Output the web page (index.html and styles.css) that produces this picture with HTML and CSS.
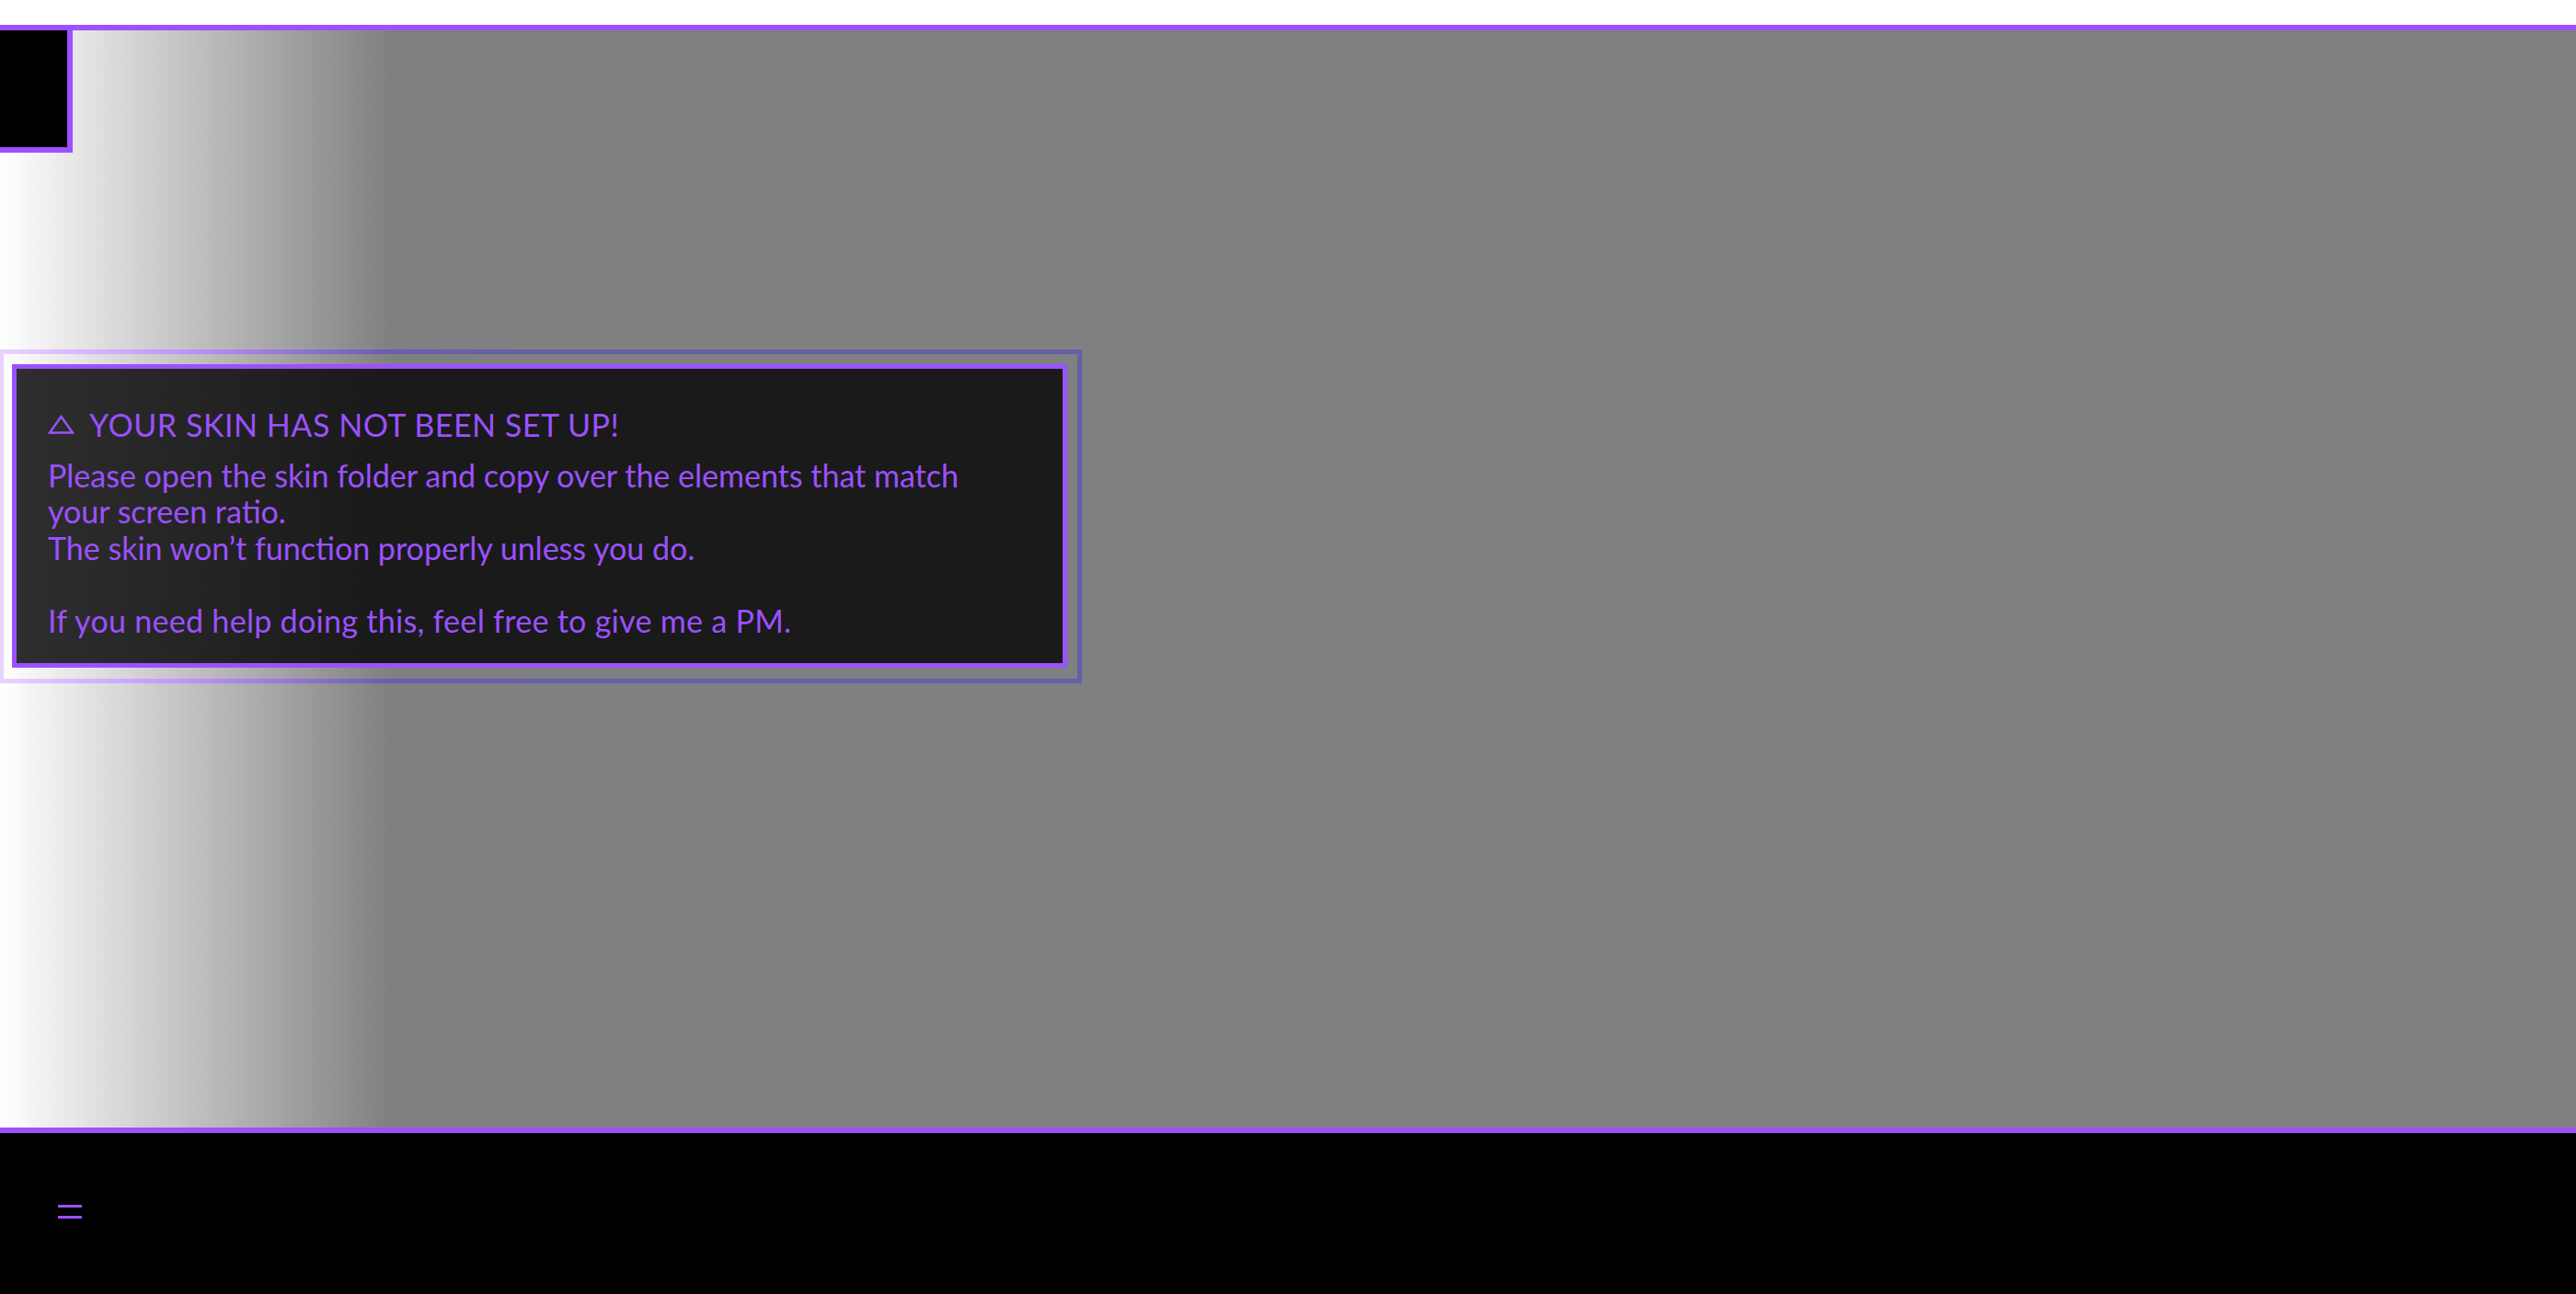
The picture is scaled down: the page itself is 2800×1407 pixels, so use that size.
FILE: index.html
```html
<!DOCTYPE html>
<html>
<head>
<meta charset="utf-8">
<link rel="stylesheet" href="styles.css">
</head>
<body>
<div class="page">
  <div class="top-gap"></div>
  <div class="rule"></div>
  <main class="stage">
    <div class="corner"></div>
    <div class="frame">
      <div class="notice">
        <div class="notice-title">
          <svg class="warn" width="29" height="21" viewBox="0 0 29 21"><path d="M14.5 2 L27 19.5 L2 19.5 Z" fill="none" stroke="#9b51ff" stroke-width="2.4" stroke-linejoin="miter"/></svg>
          <span>YOUR SKIN HAS NOT BEEN SET UP!</span>
        </div>
        <p class="notice-body">Please open the skin folder and copy over the elements that match<br>your screen ratio.<br>The skin won’t function properly unless you do.<br><br><span class="last">If you need help doing this, feel free to give me a PM.</span></p>
      </div>
    </div>
  </main>
  <div class="rule"></div>
  <footer class="footer">
    <div class="menu"><span></span><span></span></div>
  </footer>
</div>
</body>
</html>
```

FILE: styles.css
```css
html, body {
  margin: 0;
  padding: 0;
  background: #fff;
}
.page {
  width: 2800px;
  height: 1407px;
  display: flex;
  flex-direction: column;
  overflow: hidden;
}
.top-gap {
  height: 27px;
  background: #fff;
}
.rule {
  height: 6px;
  background: #9b51ff;
}
.stage {
  height: 1193px;
  background: linear-gradient(to right, #ffffff 0, #808080 425px, #808080 100%);
  display: flex;
  flex-direction: column;
  align-items: flex-start;
}
.corner {
  width: 73px;
  height: 127px;
  background: #000;
  border-right: 6px solid #9b51ff;
  border-bottom: 6px solid #9b51ff;
}
.frame {
  margin-top: 214px;
  border-style: solid;
  border-width: 5px 5px 5px 4px;
  border-image: linear-gradient(to right, #e6d3ff 0, #c395ff 190px, #6b5cb4 420px, #6460a8 560px, #6460a8 100%) 1;
  padding: 11px 11px 12px 9px;
}
.notice {
  box-sizing: border-box;
  width: 1147px;
  height: 330px;
  border: 5px solid #9b51ff;
  background: linear-gradient(to right, #2e2e2e 0, #1a1a1a 390px, #1a1a1a 100%);
  padding: 40.5px 30px 0 34px;
  color: #9b51ff;
  font-family: "Lato", "DejaVu Sans", sans-serif;
  font-size: 34px;
  line-height: 39.5px;
}
.notice-title {
  display: flex;
  align-items: center;
  gap: 16px;
  height: 39.5px;
  margin-bottom: 15.5px;
  letter-spacing: 0.55px;
}
.warn {
  flex: none;
  margin-top: 1px;
}
.notice-body {
  margin: 0;
}
.last {
  letter-spacing: 0.3px;
}
.footer {
  flex: 1;
  background: #000;
  padding: 78px 0 0 63px;
}
.menu {
  display: flex;
  flex-direction: column;
  gap: 9px;
}
.menu span {
  display: block;
  width: 26px;
  height: 3px;
  background: #9b51ff;
}
```
